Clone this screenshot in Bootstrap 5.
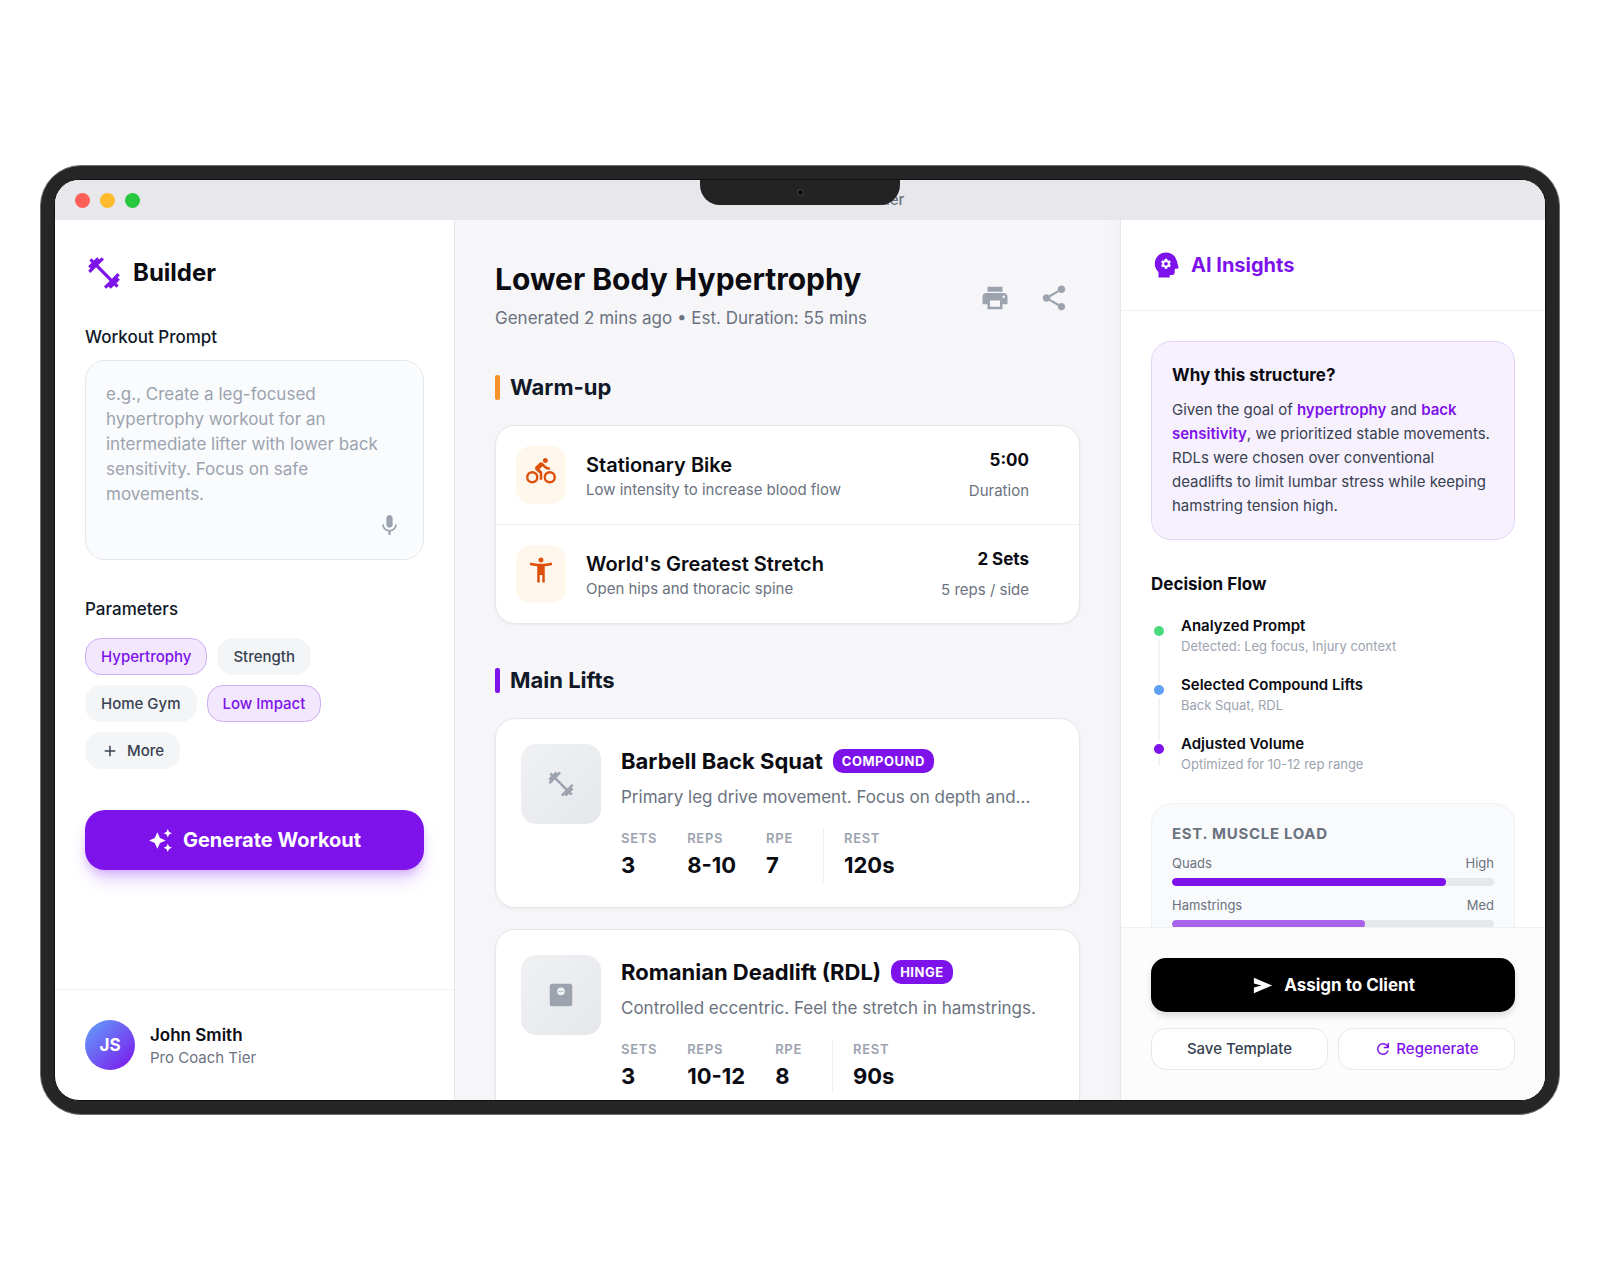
<!DOCTYPE html>
<html lang="en">
<head>
<meta charset="utf-8">
<meta name="viewport" content="width=device-width, initial-scale=1">
<title>AI Workout Builder</title>
<link href="https://cdn.jsdelivr.net/npm/bootstrap@5.3.0/dist/css/bootstrap.min.css" rel="stylesheet">
<style>
:root{--brand:#7d12eb;--ink:#0b0b12;--navy:#111827;--slate:#374151;--muted:#6b7280;--faint:#9ca3af;--line:#e5e7eb}
body{font-family:Inter,"Liberation Sans",sans-serif;background:#fff;color:var(--ink)}
svg{display:block;flex:none;fill:currentColor}
.fs-a{font-size:13px;line-height:20px}
.fs-b{font-size:15px;line-height:20px}
.fs-c{font-size:17px;line-height:25px}
.fs-d{font-size:20px;line-height:30px}
.fs-e{font-size:22px;line-height:30px}
.fs-f{font-size:24px;line-height:45px}
.fs-g{font-size:30px;line-height:38px}
.gap-10{gap:10px}
.gap-15{gap:15px}
.c-brand{color:var(--brand)}
.c-navy{color:var(--navy)}
.c-slate{color:var(--slate)}
.c-muted{color:var(--muted)}
.c-faint{color:var(--faint)}
.laptop{width:95vw;aspect-ratio:16/10;background:#262626;border:1px solid #6f6f6f;border-radius:41px;padding:13px}
.display-panel{height:100%;border:1px solid #101010;border-radius:25px;overflow:hidden;background:#fff}
.notch{top:0;left:50%;transform:translateX(-50%);width:200px;height:25px;background:#232323;border-radius:0 0 20px 20px;z-index:2}
.lens{width:7px;height:7px;background:#0a0a0a;border:1px solid #4a4a4a}
.titlebar{height:40px;background:#e8e7ec;padding:0 20px}
.light{width:15px;height:15px}
.side-l{width:400px;border-right:1px solid var(--line)}
.side-r{width:425px;border-left:1px solid var(--line)}
.pad{padding:30px}
.stage{background:#f6f6f9;padding:40px 40px 0;box-shadow:inset -14px 0 14px -12px rgba(0,0,40,.03)}
.brand-row{margin-bottom:30px}
.prompt-label{margin-bottom:10px}
.prompt{height:200px;resize:none;border:1px solid var(--line);border-radius:20px;background:#f9fbfd;padding:21px 20px}
.prompt::placeholder{color:var(--faint);opacity:1}
.mic{right:22px;bottom:22px;color:var(--faint)}
.params{margin-top:37px}
.chip{border:1px solid #f3f5f7;background:#f3f5f7;color:var(--slate);border-radius:16px;height:37px;padding:0 15px;font-weight:500}
.chip.on{background:#f2e7fd;border-color:#d0b0f5;color:var(--brand)}
.generate{height:60px;margin-top:41px;border:0;border-radius:20px;background:var(--brand);box-shadow:0 12px 18px -4px rgba(125,18,235,.25),0 4px 8px -2px rgba(125,18,235,.2)}
.rule-t{border-top:1px solid #eff0f3}
.rule-b{border-bottom:1px solid #eff0f3}
.avatar{width:50px;height:50px;background:linear-gradient(135deg,#60a5fa,#7d12eb)}
.plan-sub{margin-top:8px}
.tools{gap:29px;padding:4px 11px 0 0}
.tool{border:0;background:none;padding:0;width:30px;height:30px;color:var(--faint)}
.section-head{margin:41px 0 23px}
.tick{width:5px;height:25px;border-radius:2px;background:var(--brand)}
.tick.warmup{background:#f7922b}
.panel{background:#fff;border:1px solid var(--line);border-radius:20px;box-shadow:0 1px 3px rgba(0,0,0,.05)}
.warm{padding:20px}
.warm-ico{width:50px;height:58px;border-radius:15px;background:#fff7eb;color:#dd500c;padding-top:10px}
.warm-body{padding:4px 0 0 20px}
.warm-r{padding:2px 30px 0 0}
.lift{padding:25px;margin-bottom:21px}
.lift-body{padding:2px 0 0 20px}
.lift-text{margin:9px 0 0}
.thumb{width:80px;height:80px;border-radius:15px;background:linear-gradient(135deg,#f0f1f3,#e5e7eb);color:var(--faint)}
.tag{background:var(--brand);color:#fff;border-radius:10px;padding:2px 9px;letter-spacing:.5px}
.track-caps{letter-spacing:.7px}
.stats{gap:30px;margin-top:18px}
.stat-val{line-height:34px}
.rest{border-left:1px solid #eceef1;padding-left:20px}
.why{background:#f7f1fe;border:1px solid #e3d6fa;border-radius:20px;padding:21px 20px}
.why-text{line-height:24px;margin:10px 0 0}
.flow-head{margin:32px 0 19px}
.steps{padding-left:30px;gap:19px}
.steps::before{content:"";position:absolute;left:7px;top:17px;bottom:8px;width:2px;background:#f2f3f5}
.dot{left:-30px;top:7px;width:16px;height:16px;border:3px solid #fff}
.load{background:#f9fafc;border:1px solid #eff1f4;border-radius:20px;padding:20px;margin-top:29px}
.progress{--bs-progress-height:8px;--bs-progress-bg:#e5e7eb;--bs-progress-border-radius:4px}
.progress-bar{border-radius:4px;background:var(--brand)}
.progress-bar.mid{background:#a863ea}
.load-label{margin:9px 0 5px}
.actions{background:#fcfcfd}
.assign{height:54px;border:0;border-radius:15px;background:#000;box-shadow:0 4px 6px rgba(0,0,0,.12)}
.mini{height:42px;border:1px solid var(--line);border-radius:15px;background:#fff;font-weight:500}
</style>
</head>
<body>
<div class="min-vh-100 d-flex align-items-center justify-content-center">
 <div class="laptop">
  <div class="display-panel d-flex flex-column position-relative">
   <div class="notch position-absolute d-flex justify-content-center align-items-center"><span class="lens rounded-circle"></span></div>
   <header class="titlebar d-flex align-items-center gap-10 flex-shrink-0">
    <span class="light rounded-circle" style="background:#fe5f57"></span>
    <span class="light rounded-circle" style="background:#febb2e"></span>
    <span class="light rounded-circle" style="background:#27c83f"></span>
    <span class="fs-b flex-grow-1 text-center c-muted fw-medium">AI Workout Builder</span>
   </header>
   <div class="d-flex flex-grow-1 overflow-hidden">

    <aside class="side-l d-flex flex-column flex-shrink-0">
     <div class="pad flex-grow-1">
      <div class="brand-row d-flex align-items-center gap-10">
       <svg class="c-brand" width="38" height="38" viewBox="0 0 24 24"><path d="M20.57 14.86L22 13.43 20.57 12 17 15.57 8.43 7 12 3.43 10.57 2 9.14 3.43 7.71 2 5.57 4.14 4.14 2.71 2.71 4.14l1.43 1.43L2 7.71l1.43 1.43L2 10.57 3.43 12 7 8.43 15.57 17 12 20.57 13.43 22l1.43-1.43L16.29 22l2.14-2.14 1.43 1.43 1.43-1.43-1.43-1.43L22 16.29z"/></svg>
       <h1 class="fs-f fw-bold m-0">Builder</h1>
      </div>
      <label for="prompt" class="prompt-label fs-c c-navy fw-medium d-block">Workout Prompt</label>
      <div class="position-relative">
       <textarea id="prompt" class="prompt fs-c w-100 d-block" placeholder="e.g., Create a leg-focused hypertrophy workout for an intermediate lifter with lower back sensitivity. Focus on safe movements."></textarea>
       <button type="button" aria-label="Dictate" class="mic position-absolute border-0 bg-transparent p-0"><svg width="25" height="25" viewBox="0 0 24 24"><path d="M12 14c1.66 0 2.99-1.34 2.99-3L15 5c0-1.66-1.34-3-3-3S9 3.34 9 5v6c0 1.66 1.34 3 3 3zm5.3-3c0 3-2.54 5.1-5.3 5.1S6.7 14 6.7 11H5c0 3.41 2.72 6.23 6 6.72V21h2v-3.28c3.28-.48 6-3.3 6-6.72h-1.7z"/></svg></button>
      </div>
      <h2 class="params fs-c c-navy fw-medium mb-3">Parameters</h2>
      <div class="d-flex flex-wrap gap-10">
       <button type="button" class="chip on fs-b">Hypertrophy</button>
       <button type="button" class="chip fs-b">Strength</button>
       <button type="button" class="chip fs-b">Home Gym</button>
       <button type="button" class="chip on fs-b">Low Impact</button>
       <button type="button" class="chip fs-b d-flex align-items-center gap-2"><svg width="18" height="18" viewBox="0 -960 960 960"><path d="M440-440H200v-80h240v-240h80v240h240v80H520v240h-80v-240Z"/></svg>More</button>
      </div>
      <button type="button" class="generate w-100 text-white fs-d fw-bold d-flex align-items-center justify-content-center gap-10"><svg width="25" height="25" viewBox="0 0 24 24"><path d="M19 9l1.25-2.75L23 5l-2.75-1.25L19 1l-1.25 2.75L15 5l2.75 1.25L19 9zm-7.5.5L9 4 6.5 9.5 1 12l5.5 2.5L9 20l2.5-5.5L17 12l-5.500-2.500zM19 15l-1.250 2.750L15 19l2.750 1.250L19 23l1.250-2.750L23 19l-2.750-1.250L19 15z"/></svg>Generate Workout</button>
     </div>
     <div class="rule-t pad d-flex align-items-center gap-15">
      <div class="avatar rounded-circle text-white fw-bold fs-c d-flex align-items-center justify-content-center">JS</div>
      <div>
       <div class="fs-c fw-semibold">John Smith</div>
       <div class="fs-b c-muted">Pro Coach Tier</div>
      </div>
     </div>
    </aside>

    <main class="stage flex-grow-1 overflow-hidden">
     <div class="d-flex justify-content-between align-items-center">
      <div>
       <h2 class="fs-g fw-bold m-0">Lower Body Hypertrophy</h2>
       <p class="plan-sub fs-c c-muted mb-0">Generated 2 mins ago • Est. Duration: 55 mins</p>
      </div>
      <div class="tools d-flex">
       <button type="button" aria-label="Print" class="tool"><svg width="30" height="30" viewBox="0 0 24 24"><path d="M19 8H5c-1.66 0-3 1.34-3 3v6h4v4h12v-4h4v-6c0-1.66-1.34-3-3-3zm-3 11H8v-5h8v5zm3-7c-.55 0-1-.45-1-1s.45-1 1-1 1 .45 1 1-.45 1-1 1zm-1-9H6v4h12V3z"/></svg></button>
       <button type="button" aria-label="Share" class="tool"><svg width="30" height="30" viewBox="0 0 24 24"><path d="M18 16.08c-.76 0-1.44.3-1.96.77L8.91 12.7c.05-.23.09-.46.09-.7s-.04-.47-.09-.7l7.05-4.11c.54.5 1.25.81 2.04.81 1.66 0 3-1.34 3-3s-1.34-3-3-3-3 1.34-3 3c0 .24.04.47.09.7L8.04 9.81C7.5 9.31 6.79 9 6 9c-1.66 0-3 1.34-3 3s1.34 3 3 3c.79 0 1.5-.31 2.04-.81l7.12 4.16c-.05.21-.08.43-.08.65 0 1.61 1.31 2.92 2.92 2.92s2.92-1.31 2.92-2.92-1.31-2.92-2.92-2.92z"/></svg></button>
      </div>
     </div>

     <div class="section-head d-flex align-items-center gap-10"><span class="tick warmup"></span><h3 class="fs-e c-navy fw-bold m-0">Warm-up</h3></div>
     <div class="panel overflow-hidden">
      <div class="warm d-flex rule-b">
       <span class="warm-ico d-flex justify-content-center"><svg width="30" height="30" viewBox="0 0 24 24"><path d="M15.5 5.500c1.100 0 2-.9 2-2s-.9-2-2-2-2 .9-2 2 .9 2 2 2zM10.800 10.500l2.400-2.400.8.8c1.300 1.300 3 2.100 5.100 2.100V9c-1.500 0-2.700-.6-3.600-1.500l-1.900-1.900c-.5-.4-1-.6-1.600-.6s-1.100.2-1.400.6L7.800 8.400c-.4.4-.6.900-.6 1.400 0 .6.2 1.100.6 1.400L11 14v5h2v-6.200l-2.200-2.300z"/><circle cx="5" cy="17" r="4" fill="none" stroke="currentColor" stroke-width="1.900"/><circle cx="19" cy="17" r="4" fill="none" stroke="currentColor" stroke-width="1.900"/></svg></span>
       <div class="warm-body flex-grow-1">
        <div class="fs-d fw-semibold">Stationary Bike</div>
        <div class="fs-b c-muted">Low intensity to increase blood flow</div>
       </div>
       <div class="warm-r text-end">
        <div class="fs-c fw-bold mb-2">5:00</div>
        <div class="fs-b c-muted">Duration</div>
       </div>
      </div>
      <div class="warm d-flex">
       <span class="warm-ico d-flex justify-content-center"><svg width="30" height="30" viewBox="0 0 24 24"><path d="M20.5 6c-2.61.7-5.67 1-8.5 1s-5.89-.3-8.5-1L3 8c1.86.5 4 .83 6 1v13h2v-6h2v6h2V9c2-.17 4.14-.5 6-1l-.5-2zM12 6c1.1 0 2-.9 2-2s-.9-2-2-2-2 .9-2 2 .9 2 2 2z"/></svg></span>
       <div class="warm-body flex-grow-1">
        <div class="fs-d fw-semibold">World's Greatest Stretch</div>
        <div class="fs-b c-muted">Open hips and thoracic spine</div>
       </div>
       <div class="warm-r text-end">
        <div class="fs-c fw-bold mb-2">2 Sets</div>
        <div class="fs-b c-muted">5 reps / side</div>
       </div>
      </div>
     </div>

     <div class="section-head d-flex align-items-center gap-10"><span class="tick"></span><h3 class="fs-e c-navy fw-bold m-0">Main Lifts</h3></div>
     <article class="panel lift d-flex">
      <div class="thumb d-flex align-items-center justify-content-center flex-shrink-0"><svg width="30" height="30" viewBox="0 0 24 24"><path d="M20.57 14.86L22 13.43 20.57 12 17 15.57 8.43 7 12 3.43 10.57 2 9.14 3.43 7.71 2 5.57 4.14 4.14 2.71 2.71 4.14l1.43 1.43L2 7.71l1.43 1.43L2 10.57 3.43 12 7 8.43 15.57 17 12 20.57 13.43 22l1.43-1.43L16.29 22l2.14-2.14 1.43 1.43 1.43-1.43-1.43-1.43L22 16.29z"/></svg></div>
      <div class="lift-body">
       <div class="d-flex align-items-center gap-10"><h4 class="fs-e fw-bold m-0">Barbell Back Squat</h4><span class="tag fs-a fw-bold">COMPOUND</span></div>
       <p class="lift-text fs-c c-muted">Primary leg drive movement. Focus on depth and...</p>
       <div class="stats d-flex">
        <div><div class="fs-a fw-semibold c-faint track-caps">SETS</div><div class="stat-val fs-e fw-bold">3</div></div>
        <div><div class="fs-a fw-semibold c-faint track-caps">REPS</div><div class="stat-val fs-e fw-bold">8-10</div></div>
        <div><div class="fs-a fw-semibold c-faint track-caps">RPE</div><div class="stat-val fs-e fw-bold">7</div></div>
        <div class="rest"><div class="fs-a fw-semibold c-faint track-caps">REST</div><div class="stat-val fs-e fw-bold">120s</div></div>
       </div>
      </div>
     </article>
     <article class="panel lift d-flex">
      <div class="thumb d-flex align-items-center justify-content-center flex-shrink-0"><svg width="30" height="30" viewBox="0 0 24 24"><rect x="3" y="3" width="18" height="18" rx="2"/><circle cx="12" cy="9" r="3.1" fill="#eff0f2"/><circle cx="10.5" cy="9" r=".5"/><circle cx="12" cy="9" r=".5"/><circle cx="13.5" cy="9" r=".5"/></svg></div>
      <div class="lift-body">
       <div class="d-flex align-items-center gap-10"><h4 class="fs-e fw-bold m-0">Romanian Deadlift (RDL)</h4><span class="tag fs-a fw-bold">HINGE</span></div>
       <p class="lift-text fs-c c-muted">Controlled eccentric. Feel the stretch in hamstrings.</p>
       <div class="stats d-flex">
        <div><div class="fs-a fw-semibold c-faint track-caps">SETS</div><div class="stat-val fs-e fw-bold">3</div></div>
        <div><div class="fs-a fw-semibold c-faint track-caps">REPS</div><div class="stat-val fs-e fw-bold">10-12</div></div>
        <div><div class="fs-a fw-semibold c-faint track-caps">RPE</div><div class="stat-val fs-e fw-bold">8</div></div>
        <div class="rest"><div class="fs-a fw-semibold c-faint track-caps">REST</div><div class="stat-val fs-e fw-bold">90s</div></div>
       </div>
      </div>
     </article>
    </main>

    <aside class="side-r d-flex flex-column flex-shrink-0">
     <div class="pad rule-b d-flex align-items-center gap-10 c-brand flex-shrink-0">
      <svg width="30" height="30" viewBox="0 -960 960 960"><path d="M240-80v-172q-57-52-88.5-121.5T120-520q0-150 105-255t255-105q125 0 221.5 73.5T827-615l52 205q5 19-7 34.5T840-360h-80v120q0 33-23.5 56.5T680-160h-80v80H240Zm200-280h80l6-50q8-3 14.5-7t11.5-9l46 20 40-68-40-30q2-8 2-16t-2-16l40-30-40-68-46 20q-5-5-11.5-9t-14.5-7l-6-50h-80l-6 50q-8 3-14.5 7t-11.5 9l-46-20-40 68 40 30q-2 8-2 16t2 16l-40 30 40 68 46-20q5 5 11.5 9t14.5 7l6 50Zm40-100q-25 0-42.5-17.5T420-520q0-25 17.5-42.5T480-580q25 0 42.5 17.5T540-520q0 25-17.5 42.5T480-460Z"/></svg>
      <h2 class="fs-d fw-bold m-0">AI Insights</h2>
     </div>
     <div class="pad pb-0 flex-grow-1 overflow-hidden">
      <section class="why">
       <h3 class="fs-c fw-bold m-0">Why this structure?</h3>
       <p class="why-text fs-b c-slate">Given the goal of <span class="c-brand fw-semibold">hypertrophy</span> and <span class="c-brand fw-semibold">back sensitivity</span>, we prioritized stable movements. RDLs were chosen over conventional deadlifts to limit lumbar stress while keeping hamstring tension high.</p>
      </section>
      <h3 class="flow-head fs-c fw-bold">Decision Flow</h3>
      <div class="steps position-relative d-flex flex-column">
       <div class="position-relative"><span class="dot position-absolute rounded-circle" style="background:#48d97c"></span><div class="fs-b fw-semibold">Analyzed Prompt</div><div class="fs-a c-faint">Detected: Leg focus, Injury context</div></div>
       <div class="position-relative"><span class="dot position-absolute rounded-circle" style="background:#5f9ff5"></span><div class="fs-b fw-semibold">Selected Compound Lifts</div><div class="fs-a c-faint">Back Squat, RDL</div></div>
       <div class="position-relative"><span class="dot position-absolute rounded-circle" style="background:#7d12eb"></span><div class="fs-b fw-semibold">Adjusted Volume</div><div class="fs-a c-faint">Optimized for 10-12 rep range</div></div>
      </div>
      <section class="load">
       <h3 class="fs-b fw-bold c-muted track-caps m-0">EST. MUSCLE LOAD</h3>
       <div class="load-label fs-a c-muted d-flex justify-content-between"><span>Quads</span><span>High</span></div>
       <div class="progress"><div class="progress-bar" style="width:85%"></div></div>
       <div class="load-label fs-a c-muted d-flex justify-content-between"><span>Hamstrings</span><span>Med</span></div>
       <div class="progress"><div class="progress-bar mid" style="width:60%"></div></div>
      </section>
     </div>
     <div class="actions rule-t pad flex-shrink-0">
      <button type="button" class="assign w-100 text-white fs-c fw-bold d-flex align-items-center justify-content-center gap-10"><svg width="23" height="23" viewBox="0 -960 960 960"><path d="M120-160v-240l320-80-320-80v-240l760 320-760 320Z"/></svg>Assign to Client</button>
      <div class="d-flex gap-10 mt-3">
       <button type="button" class="mini w-50 fs-b c-slate">Save Template</button>
       <button type="button" class="mini w-50 fs-b c-brand d-flex align-items-center justify-content-center gap-1"><svg width="18" height="18" viewBox="0 -960 960 960"><path d="M480-160q-134 0-227-93t-93-227q0-134 93-227t227-93q69 0 132 28.5T720-690v-110h80v280H520v-80h168q-32-56-87.5-88T480-720q-100 0-170 70t-70 170q0 100 70 170t170 70q77 0 139-44t87-116h84q-28 106-114 173t-196 67Z"/></svg>Regenerate</button>
      </div>
     </div>
    </aside>
   </div>
  </div>
 </div>
</div>
<script src="https://cdn.jsdelivr.net/npm/bootstrap@5.3.0/dist/js/bootstrap.bundle.min.js"></script>
</body>
</html>
